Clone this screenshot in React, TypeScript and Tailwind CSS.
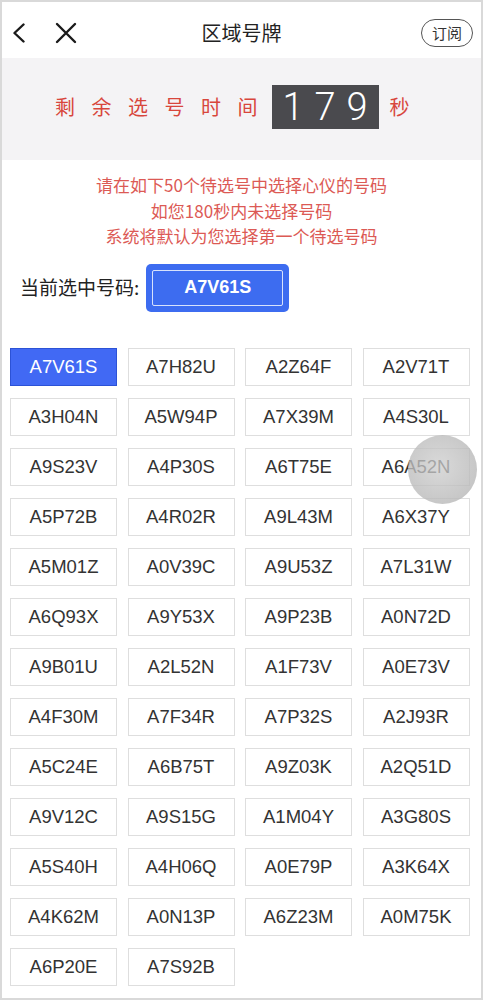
import { useState } from "react";

const codes = [
  "A7V61S", "A7H82U", "A2Z64F", "A2V71T",
  "A3H04N", "A5W94P", "A7X39M", "A4S30L",
  "A9S23V", "A4P30S", "A6T75E", "A6A52N",
  "A5P72B", "A4R02R", "A9L43M", "A6X37Y",
  "A5M01Z", "A0V39C", "A9U53Z", "A7L31W",
  "A6Q93X", "A9Y53X", "A9P23B", "A0N72D",
  "A9B01U", "A2L52N", "A1F73V", "A0E73V",
  "A4F30M", "A7F34R", "A7P32S", "A2J93R",
  "A5C24E", "A6B75T", "A9Z03K", "A2Q51D",
  "A9V12C", "A9S15G", "A1M04Y", "A3G80S",
  "A5S40H", "A4H06Q", "A0E79P", "A3K64X",
  "A4K62M", "A0N13P", "A6Z23M", "A0M75K",
  "A6P20E", "A7S92B",
];

const cjk = { fontFamily: '"Noto Sans CJK SC", "Noto Sans", sans-serif' };
const latin = { fontFamily: '"Liberation Sans", Arial, sans-serif' };

export default function App() {
  const [selected, setSelected] = useState("A7V61S");

  return (
    <div className="relative w-[483px] h-[1000px] overflow-hidden border-2 border-[#d9d9d9] bg-white" style={cjk}>
      {/* header */}
      <div className="grid grid-cols-[1fr_auto_1fr] items-center h-[56px] pt-[6px] px-[8px]">
        <div className="flex items-center gap-[29px] pl-[2px]">
          <svg width="14" height="20" viewBox="0 0 14 20" fill="none">
            <path d="M11.5 1.5 L2.5 10 L11.5 18.5" stroke="#1a1a1a" strokeWidth="2.4" strokeLinecap="round" strokeLinejoin="round" />
          </svg>
          <svg width="22" height="22" viewBox="0 0 22 22" fill="none">
            <path d="M2 2 L20 20 M20 2 L2 20" stroke="#1a1a1a" strokeWidth="2.4" strokeLinecap="round" />
          </svg>
        </div>
        <div className="text-[20px] text-[#222]">区域号牌</div>
        <div className="flex justify-end">
          <div className="h-[28px] w-[52px] rounded-full border border-[#555] flex items-center justify-center text-[15px] text-[#333]">
            订阅
          </div>
        </div>
      </div>

      {/* countdown */}
      <div className="h-[102px] bg-[#f4f3f5] flex items-center pl-[53px] pb-[4px]">
        <div className="flex gap-[16.5px] text-[20px] text-[#d8463c]">
          {"剩余选号时间".split("").map((c, i) => (
            <span key={i}>{c}</span>
          ))}
        </div>
        <div
          className="ml-[14px] w-[107px] h-[44px] bg-[#4a4a4e] flex items-center justify-center text-white text-[38px] font-light tracking-[11px] pl-[11px]"
          style={{ fontFamily: 'Roboto, "Liberation Sans", sans-serif' }}
        >
          179
        </div>
        <span className="ml-[11px] text-[20px] text-[#d8463c]">秒</span>
      </div>

      {/* notice */}
      <div className="pt-[12px] flex flex-col items-center text-[17px] leading-[25.5px] text-[#dc5a55]">
        <div>请在如下50个待选号中选择心仪的号码</div>
        <div>如您180秒内未选择号码</div>
        <div>系统将默认为您选择第一个待选号码</div>
      </div>

      {/* current */}
      <div className="mt-[15px] flex items-center pl-[18px]">
        <span className="text-[19px] text-[#222]">当前选中号码:</span>
        <div className="ml-[7px] w-[143px] h-[48px] rounded-[5px] bg-[#3d6cf0] p-[6px]">
          <div
            className="h-full w-full border border-white/80 rounded-[2px] flex items-center justify-center text-white text-[18px] font-bold"
            style={latin}
          >
            {selected}
          </div>
        </div>
      </div>

      {/* grid */}
      <div className="mt-[36px] pl-[8px] grid grid-cols-[repeat(4,107px)] gap-x-[10.5px] gap-y-[12px]">
        {codes.map((c) => {
          const on = c === selected;
          return (
            <button
              key={c}
              onClick={() => setSelected(c)}
              className={
                on
                  ? "h-[38px] bg-[#4169f4] border border-[#2c52d6] text-white text-[18.5px] flex items-center justify-center"
                  : "h-[38px] bg-white border border-[#dedede] text-[#333] text-[18.5px] flex items-center justify-center"
              }
              style={latin}
            >
              {c}
            </button>
          );
        })}
      </div>

      {/* touch indicator */}
      <div className="absolute left-[406px] top-[433px] w-[69px] h-[69px] rounded-full bg-[radial-gradient(circle_at_45%_45%,rgba(205,205,205,0.75)_0%,rgba(185,185,185,0.8)_70%,rgba(160,160,160,0.85)_100%)]" />
    </div>
  );
}
